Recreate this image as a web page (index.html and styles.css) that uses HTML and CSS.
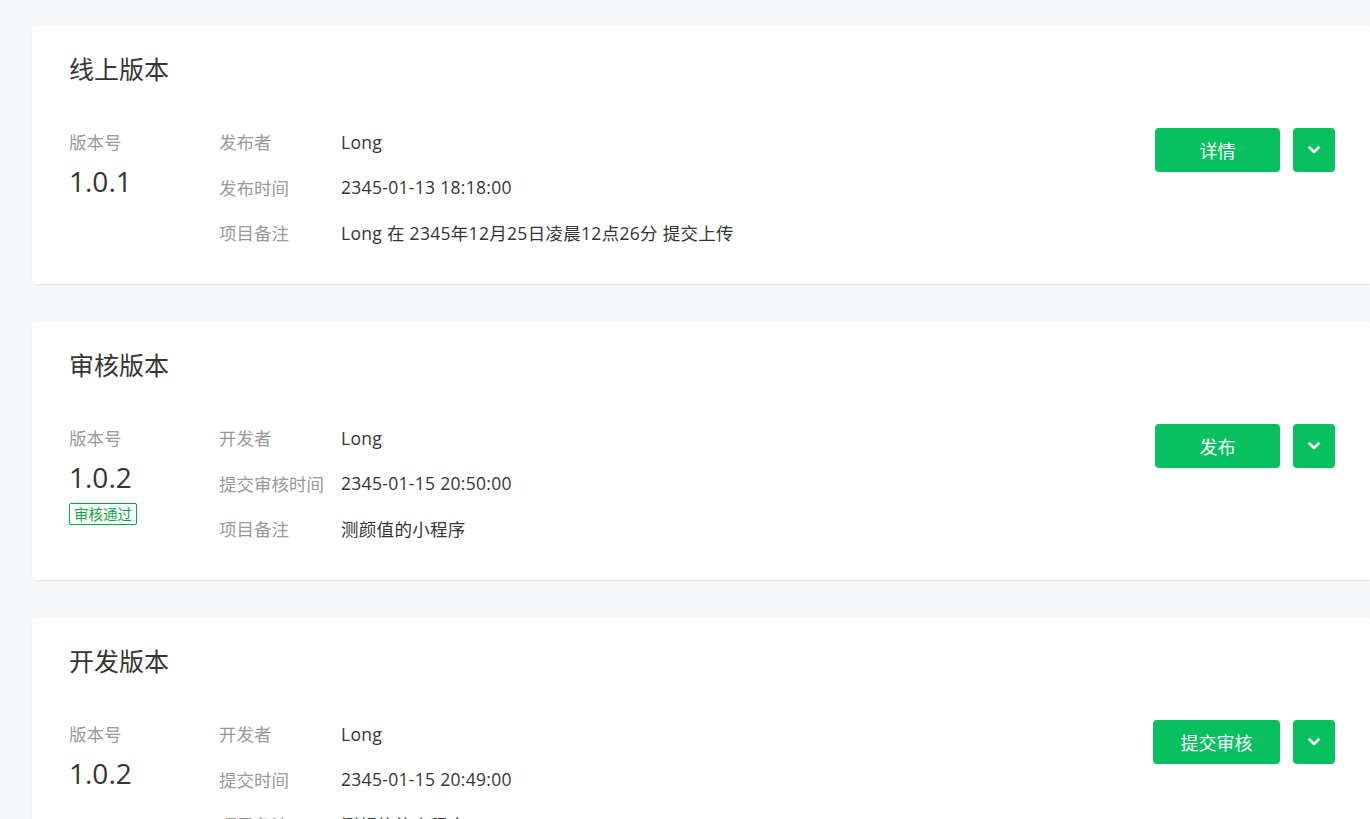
FILE: index.html
```html
<!DOCTYPE html>
<html lang="zh-CN">
<head>
<meta charset="utf-8">
<title>版本管理</title>
<link rel="stylesheet" href="styles.css">
</head>
<body>
<main class="page">
  <section class="card">
    <h2 class="card-title">线上版本</h2>
    <div class="card-body">
      <div class="ver">
        <div class="ver-label">版本号</div>
        <div class="ver-num">1.0.1</div>
      </div>
      <dl class="info">
        <dt>发布者</dt><dd>Long</dd>
        <dt>发布时间</dt><dd>2345-01-13 18:18:00</dd>
        <dt>项目备注</dt><dd>Long 在 2345年12月25日凌晨12点26分 提交上传</dd>
      </dl>
      <div class="actions">
        <button class="btn">详情</button>
        <button class="btn-drop"><svg width="14" height="10" viewBox="0 0 14 10"><path d="M2.5 2.5 L7 7 L11.5 2.5" fill="none" stroke="#fff" stroke-width="2.6" stroke-linecap="round" stroke-linejoin="round"/></svg></button>
      </div>
    </div>
  </section>

  <section class="card">
    <h2 class="card-title">审核版本</h2>
    <div class="card-body">
      <div class="ver">
        <div class="ver-label">版本号</div>
        <div class="ver-num">1.0.2</div>
        <span class="badge">审核通过</span>
      </div>
      <dl class="info">
        <dt>开发者</dt><dd>Long</dd>
        <dt>提交审核时间</dt><dd>2345-01-15 20:50:00</dd>
        <dt>项目备注</dt><dd>测颜值的小程序</dd>
      </dl>
      <div class="actions">
        <button class="btn">发布</button>
        <button class="btn-drop"><svg width="14" height="10" viewBox="0 0 14 10"><path d="M2.5 2.5 L7 7 L11.5 2.5" fill="none" stroke="#fff" stroke-width="2.6" stroke-linecap="round" stroke-linejoin="round"/></svg></button>
      </div>
    </div>
  </section>

  <section class="card">
    <h2 class="card-title">开发版本</h2>
    <div class="card-body">
      <div class="ver">
        <div class="ver-label">版本号</div>
        <div class="ver-num">1.0.2</div>
      </div>
      <dl class="info">
        <dt>开发者</dt><dd>Long</dd>
        <dt>提交时间</dt><dd>2345-01-15 20:49:00</dd>
        <dt>项目备注</dt><dd>测颜值的小程序</dd>
      </dl>
      <div class="actions">
        <button class="btn btn-wide">提交审核</button>
        <button class="btn-drop"><svg width="14" height="10" viewBox="0 0 14 10"><path d="M2.5 2.5 L7 7 L11.5 2.5" fill="none" stroke="#fff" stroke-width="2.6" stroke-linecap="round" stroke-linejoin="round"/></svg></button>
      </div>
    </div>
  </section>
</main>
</body>
</html>
```

FILE: styles.css
```css
* { box-sizing: border-box; }
html, body {
  margin: 0;
  padding: 0;
  background: #f6f7f9;
  overflow: hidden;
  width: 1370px;
  height: 819px;
}
body {
  font-family: "Open Sans", "Noto Sans CJK SC", sans-serif;
  color: #353535;
}
.page {
  padding: 26px 0 0 32px;
  display: flex;
  flex-direction: column;
  gap: 38px;
  width: 1410px;
}
.card {
  background: #fff;
  border-radius: 4px;
  box-shadow: 0 1px 2px rgba(0,0,0,0.08);
  width: 1340px;
  height: 258px;
  padding: 27px 37px 0 37px;
  overflow: hidden;
}
.card-title {
  margin: 0;
  font-family: "Noto Sans CJK SC", sans-serif;
  font-size: 25px;
  font-weight: 400;
  line-height: 30px;
  color: #353535;
}
.card-body {
  margin-top: 36px;
  display: flex;
  align-items: flex-start;
}
.ver {
  width: 150px;
  flex: none;
  display: flex;
  flex-direction: column;
  align-items: flex-start;
}
.ver-label {
  font-size: 17.5px;
  line-height: 46px;
  color: #999;
}
.ver-num {
  font-size: 28px;
  line-height: 34px;
  margin-top: -1px;
}
.badge {
  margin-top: 9px;
  border: 1px solid #09a63d;
  color: #09a63d;
  font-family: "Noto Sans CJK SC", sans-serif;
  font-size: 14.5px;
  line-height: 20px;
  padding: 0 4px;
  border-radius: 2px;
}
.info {
  margin: 0;
  flex: 1;
  display: grid;
  grid-template-columns: 122px 1fr;
  grid-auto-rows: 45.5px;
  align-items: center;
  font-size: 17.5px;
  letter-spacing: 0.3px;
}
.info dt { color: #999; letter-spacing: 0; }
.info dd { margin: 0; color: #353535; }
.actions {
  padding-top: 9px;
  display: flex;
  gap: 13px;
}
.btn {
  width: 125px;
  height: 44px;
  border: none;
  border-radius: 4px;
  background: #07c160;
  color: #fff;
  font-family: "Noto Sans CJK SC", sans-serif;
  font-size: 18px;
  cursor: pointer;
}
.btn-wide { width: 127px; }
.btn-drop {
  width: 42px;
  height: 44px;
  border: none;
  border-radius: 4px;
  background: #07c160;
  display: flex;
  align-items: center;
  justify-content: center;
  padding: 0;
}
```
